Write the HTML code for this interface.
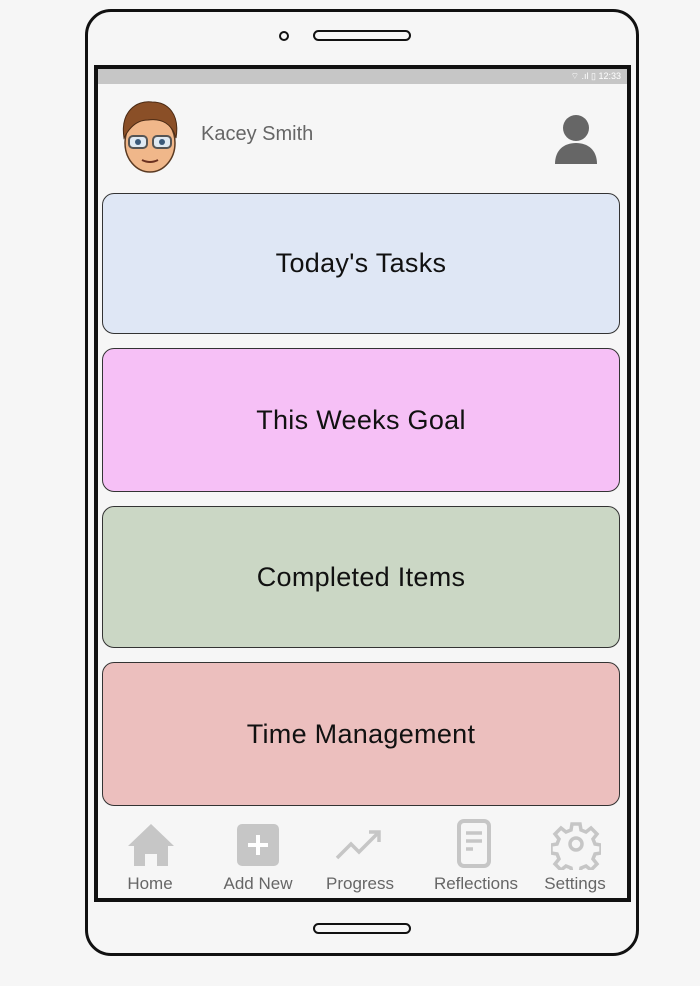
<!DOCTYPE html>
<html><head><style>
body{margin:0;width:700px;height:986px;background:#f6f6f6;position:relative;overflow:hidden;font-family:"Liberation Sans",sans-serif}
.a{position:absolute;box-sizing:border-box}
.card{left:102px;width:518px;border:1.5px solid #333;border-radius:12px;display:flex;align-items:center;justify-content:center;font-size:27px;color:#111;letter-spacing:0.3px}
.lab{top:874px;font-size:17px;color:#666;text-align:center;width:110px}
</style></head><body>
<div class="a" style="left:85px;top:9px;width:554px;height:947px;border:3px solid #111;border-radius:26px"></div>
<div class="a" style="left:279px;top:31px;width:10px;height:10px;border:2.5px solid #111;border-radius:50%"></div>
<div class="a" style="left:313px;top:30px;width:98px;height:11px;border:2.5px solid #111;border-radius:6px"></div>
<div class="a" style="left:313px;top:923px;width:98px;height:11px;border:2.5px solid #111;border-radius:6px"></div>
<div class="a" style="left:94px;top:65px;width:537px;height:837px;border:4px solid #111;background:#f6f6f6"></div>
<div class="a" style="left:98px;top:69px;width:529px;height:15px;background:#c6c6c6;color:#fff;font-size:9px;text-align:right;padding-right:6px;line-height:15px">⌔ .ıl ▯ 12:33</div>
<svg class="a" style="left:118px;top:98px" width="64" height="76" viewBox="0 0 64 76">
<ellipse cx="32" cy="45" rx="25" ry="29" fill="#f0b78a" stroke="#5a3a22" stroke-width="1.5"/>
<path d="M6 40 C2 14 18 2 34 4 C50 4 62 16 58 40 C54 26 44 20 30 22 C20 22 12 28 6 40Z" fill="#8a4f27" stroke="#4a2a14"/>
<rect x="11" y="38" width="18" height="12" rx="4" fill="#dfe9f2" stroke="#555" stroke-width="2"/>
<rect x="35" y="38" width="18" height="12" rx="4" fill="#dfe9f2" stroke="#555" stroke-width="2"/>
<circle cx="20" cy="44" r="3" fill="#3a5a7a"/><circle cx="44" cy="44" r="3" fill="#3a5a7a"/>
<path d="M24 62 Q32 66 40 62" stroke="#6a3020" stroke-width="2" fill="none"/>
</svg>
<div class="a" style="left:201px;top:123px;font-size:20px;color:#666">Kacey Smith</div>
<svg class="a" style="left:554px;top:114px" width="44" height="50" viewBox="0 0 44 50"><circle cx="22" cy="14" r="13" fill="#666"/><path d="M1 50 C1 36 10 29 22 29 C34 29 43 36 43 50Z" fill="#666"/></svg>
<div class="a card" style="top:193px;height:141px;background:#dfe7f5">Today's Tasks</div>
<div class="a card" style="top:348px;height:144px;background:#f6c0f6">This Weeks Goal</div>
<div class="a card" style="top:506px;height:142px;background:#cbd7c5">Completed Items</div>
<div class="a card" style="top:662px;height:144px;background:#ecbfbe">Time Management</div>
<svg class="a" style="left:126px;top:822px" width="50" height="46" viewBox="0 0 50 46"><path d="M25 2 L48 24 L42 24 L42 44 L31 44 L31 32 L19 32 L19 44 L8 44 L8 24 L2 24Z" fill="#c6c6c6"/></svg>
<svg class="a" style="left:227px;top:822px" width="62" height="46" viewBox="0 0 62 46"><rect x="10" y="2" width="42" height="42" rx="5" fill="#c6c6c6"/><path d="M31 13V33M21 23H41" stroke="#fff" stroke-width="4"/></svg>
<svg class="a" style="left:335px;top:828px" width="52" height="36" viewBox="0 0 52 36"><path d="M2 30 L16 16 L24 24 L44 4 M34 4 H44 V14" stroke="#c6c6c6" stroke-width="3.5" fill="none"/></svg>
<svg class="a" style="left:455px;top:818px" width="40" height="52" viewBox="0 0 40 52"><rect x="4" y="3" width="30" height="45" rx="5" stroke="#c6c6c6" stroke-width="4" fill="none"/><path d="M11 15H27M11 23H27M11 31H18" stroke="#c6c6c6" stroke-width="3.5"/></svg>
<svg class="a" style="left:551px;top:820px" width="50" height="50" viewBox="0 0 50 50"><g fill="none" stroke="#c6c6c6" stroke-width="3.5"><circle cx="25" cy="24" r="6"/><path d="M21 4h8l1 6 5 2 5-4 6 6-4 5 2 5 6 1v8l-6 1-2 5 4 5-6 6-5-4-5 2-1 6h-8l-1-6-5-2-5 4-6-6 4-5-2-5-6-1v-8l6-1 2-5-4-5 6-6 5 4 5-2z"/></g></svg>
<div class="a lab" style="left:95px">Home</div>
<div class="a lab" style="left:203px">Add New</div>
<div class="a lab" style="left:305px">Progress</div>
<div class="a lab" style="left:421px">Reflections</div>
<div class="a lab" style="left:520px">Settings</div>
</body></html>
